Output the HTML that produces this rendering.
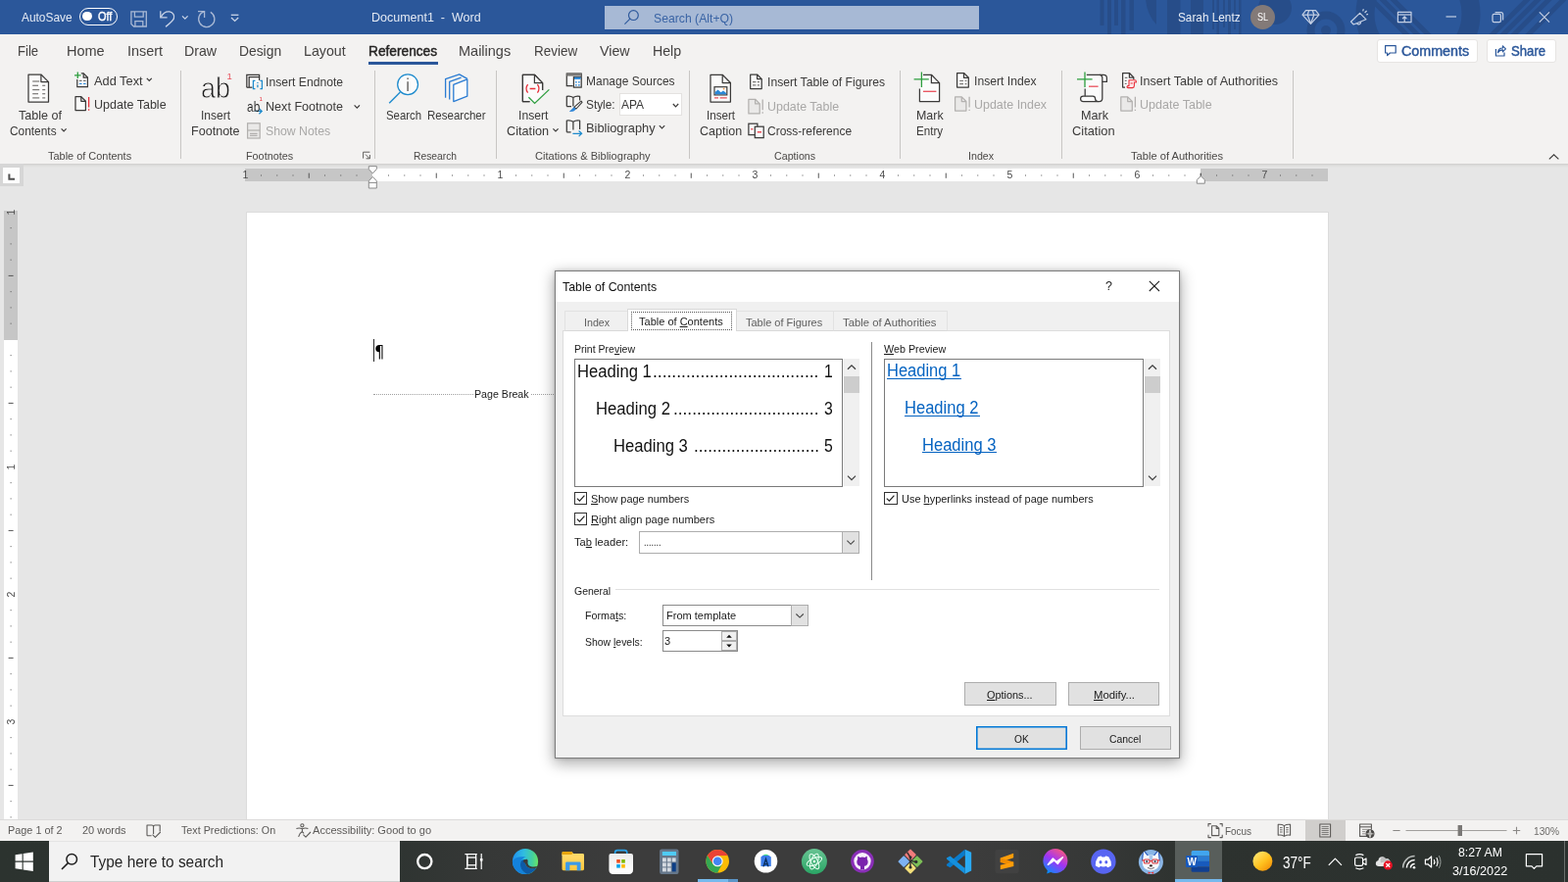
<!DOCTYPE html>
<html lang="en"><head><meta charset="utf-8"><title>Document1 - Word</title>
<style>
html,body{margin:0;padding:0;}
body{width:1600px;height:900px;overflow:hidden;background:#e6e6e6;position:relative;font-family:"Liberation Sans",sans-serif;}
div,span,svg{position:absolute;box-sizing:border-box;}
span{white-space:pre;transform-origin:0 50%;}
svg{overflow:visible;}
u{text-decoration:underline;text-underline-offset:1px;text-decoration-thickness:1px;}
</style></head><body><div id="screen" style="left:0;top:0;width:1600px;height:900px;will-change:transform;">
<div style="left:0px;top:0px;width:1600px;height:35.4px;background:#2b579a;"></div>
<svg style="left:0;top:0;overflow:hidden" width="1600" height="35" viewBox="0 0 1600 35"><g fill="#274d89"><rect x="1122.5" y="0" width="4.0" height="26"/><rect x="1130" y="0" width="4" height="35"/><rect x="1137" y="0" width="4" height="26"/><rect x="1144" y="0" width="4.5" height="35"/><rect x="1152.5" y="0" width="4.5" height="31"/><rect x="1191" y="0" width="13.5" height="35"/><rect x="1215" y="0" width="13" height="35"/><rect x="1237" y="0" width="2" height="30"/><rect x="1241.5" y="0" width="2.5" height="35"/><rect x="1248" y="0" width="2" height="28"/><rect x="1253" y="0" width="3" height="35"/><rect x="1259" y="0" width="2" height="30"/><rect x="1264" y="0" width="2.5" height="35"/><path d="M1169 0 Q1171 16 1180 25 L1180 0 Z"/><circle cx="1301" cy="8" r="17"/></g><g fill="none" stroke="#274d89"><circle cx="1353" cy="31" r="15.5" stroke-width="8"/><circle cx="1447" cy="14" r="54" stroke-width="19"/><path d="M1398 -2 L1440 40 M1409 -2 L1451 40 M1420 -2 L1462 40" stroke-width="5"/><path d="M1521 37 L1560 -2 M1532 37 L1571 -2 M1543 37 L1582 -2 M1558 37 L1597 -2" stroke-width="5"/></g><circle cx="1353" cy="31" r="5" fill="#274d89"/></svg>
<span style="left:21.5px;top:9.6px;font-size:13.5px;line-height:15px;color:#e3e9f3;transform:scaleX(0.8814);">AutoSave</span>
<div style="left:80.5px;top:8px;width:39.5px;height:17.5px;border:1.5px solid #fff;border-radius:9px;"></div>
<div style="left:84.3px;top:11.8px;width:9.5px;height:9.5px;border-radius:5px;background:#fff;"></div>
<span style="left:100.0px;top:10.1px;font-size:12.5px;line-height:14px;color:#fff;transform:scaleX(0.8758);-webkit-text-stroke:0.4px #fff;">Off</span>
<span style="left:378.5px;top:9.6px;font-size:13.5px;line-height:15px;color:#e3e9f3;transform:scaleX(0.9258);">Document1  -  Word</span>
<div style="left:617px;top:6px;width:382px;height:24px;background:#a7b9d5;"></div>
<div style="left:617px;top:30px;width:382px;height:1px;background:#22509a;"></div>
<span style="left:667.0px;top:10.7px;font-size:13.5px;line-height:15px;color:#3a64a5;transform:scaleX(0.9045);">Search (Alt+Q)</span>
<span style="left:1201.5px;top:9.9px;font-size:13.5px;line-height:15px;color:#e8edf5;transform:scaleX(0.8736);">Sarah Lentz</span>
<div style="left:1276px;top:5px;width:25px;height:25px;border-radius:13px;background:#837a78;"></div>
<span style="left:1282.5px;top:11.3px;font-size:11.5px;line-height:12px;color:#fff;transform:scaleX(0.7891);">SL</span>
<svg style="left:0;top:0" width="1600" height="35" viewBox="0 0 1600 35"><g fill="none" stroke="#a9b9d5" stroke-width="1.3" stroke-linejoin="miter"><path d="M133.9 11.8 H149.3 V27 H136.5 L133.9 24.4 Z"/><path d="M137.4 12 V17.1 H146.2 V12"/><path d="M137.9 27 V21.7 H145.8 V27"/><path d="M214.8 12.4 A8.1 8.1 0 1 1 208.4 11.7"/><path d="M202 11.7 H208.6 V18"/></g><g fill="none" stroke="#c9d4e7" stroke-width="1.3"><path d="M163.8 11.2 V17.8 H170.6"/><path d="M164.2 17.4 C166.4 13.4 169.8 11.4 173 11.9 C176.4 12.5 178.4 15.6 177.4 18.8 C176.6 21.4 173.4 23.8 169 27.3"/><path d="M186 16.4 L188.8 19.2 L191.6 16.4"/><path d="M235.8 15.3 H243.4"/><path d="M236 18 L239.6 21.4 L243.2 18"/></g><g fill="none" stroke="#2f5a9d" stroke-width="1.2"><circle cx="646.4" cy="15.6" r="4.9"/><path d="M642.9 19.2 L637.4 24.7"/></g><g fill="none" stroke="#c3cfe4" stroke-width="1.2" stroke-linejoin="round"><path d="M1332.5 10.6 H1342.5 L1346 15.2 L1337.5 24.3 L1329 15.2 Z"/><path d="M1329.2 15.2 H1345.8"/><path d="M1335.6 10.8 L1334.2 15.2 L1337.5 24 L1340.8 15.2 L1339.4 10.8"/><path d="M1387.6 13.4 L1394 19.8 L1381.2 25 L1378.4 22.2 Z"/><path d="M1384.6 23.8 A2.2 2.2 0 0 0 1388.6 22.2"/><path d="M1390.6 11.4 L1391.4 9.2 M1392.6 13 L1394.6 11 M1394.2 15 L1396 14.4"/><rect x="1426.4" y="12.4" width="13.6" height="10.2"/><path d="M1426.4 15 H1440"/><path d="M1433.2 22 V17.2 M1431 19.2 L1433.2 17 L1435.4 19.2"/><path d="M1475.5 17 H1486"/><rect x="1523" y="14.4" width="8.4" height="8.2" rx="1.6"/><path d="M1525.6 12.6 H1531.6 A2 2 0 0 1 1533.6 14.6 V20.4"/><path d="M1570.8 12.4 L1581 22.6 M1581 12.4 L1570.8 22.6"/></g></svg>
<div style="left:0px;top:35px;width:1600px;height:132px;background:#f3f2f1;"></div>
<span style="left:17.5px;top:43.5px;font-size:14.5px;line-height:16px;color:#444241;transform:scaleX(0.9030);">File</span>
<span style="left:68.0px;top:43.5px;font-size:14.5px;line-height:16px;color:#444241;">Home</span>
<span style="left:129.5px;top:43.5px;font-size:14.5px;line-height:16px;color:#444241;transform:scaleX(0.9955);">Insert</span>
<span style="left:188.0px;top:43.5px;font-size:14.5px;line-height:16px;color:#444241;transform:scaleX(0.9782);">Draw</span>
<span style="left:244.0px;top:43.5px;font-size:14.5px;line-height:16px;color:#444241;transform:scaleX(0.9549);">Design</span>
<span style="left:309.5px;top:43.5px;font-size:14.5px;line-height:16px;color:#444241;transform:scaleX(0.9785);">Layout</span>
<span style="left:468.0px;top:43.5px;font-size:14.5px;line-height:16px;color:#444241;">Mailings</span>
<span style="left:544.5px;top:43.5px;font-size:14.5px;line-height:16px;color:#444241;transform:scaleX(0.9276);">Review</span>
<span style="left:612.0px;top:43.5px;font-size:14.5px;line-height:16px;color:#444241;transform:scaleX(0.9818);">View</span>
<span style="left:665.5px;top:43.5px;font-size:14.5px;line-height:16px;color:#444241;transform:scaleX(0.9758);">Help</span>
<span style="left:376.0px;top:43.5px;font-size:14.5px;line-height:16px;color:#252423;transform:scaleX(0.9454);-webkit-text-stroke:0.45px #252423;">References</span>
<div style="left:376px;top:63px;width:71px;height:2.5px;background:#2b579a;"></div>
<div style="left:1405px;top:40px;width:103px;height:24px;background:#fff;border:1px solid #e6e4e2;border-radius:3px;"></div>
<div style="left:1517px;top:40px;width:71px;height:24px;background:#fff;border:1px solid #e6e4e2;border-radius:3px;"></div>
<span style="left:1429.5px;top:43.5px;font-size:14.5px;line-height:16px;color:#2b579a;transform:scaleX(0.9857);-webkit-text-stroke:0.45px #2b579a;">Comments</span>
<span style="left:1542.0px;top:43.5px;font-size:14.5px;line-height:16px;color:#2b579a;transform:scaleX(0.9071);-webkit-text-stroke:0.45px #2b579a;">Share</span>
<svg style="left:0;top:35px" width="1600" height="131" viewBox="0 35 1600 131"><g fill="none" stroke="#2b579a" stroke-width="1.2" stroke-linejoin="round"><path d="M1413.6 46.6 H1424.2 V54 H1418.4 L1415.6 56.6 V54 H1413.6 Z"/><path d="M1526.4 50 V57 H1535 V53.6"/><path d="M1528.4 53.8 C1528.8 50.6 1530.8 49 1533.4 49 V46.8 L1536.4 49.8 L1533.4 52.8 V50.8 C1531.2 50.8 1529.6 51.8 1528.4 53.8 Z"/></g><path d="M1580.8 162.4 L1585.6 157.8 L1590.4 162.4" fill="none" stroke="#3b3a39" stroke-width="1.2"/></svg>
<div style="left:184px;top:72px;width:1px;height:90px;background:#c8c6c4;"></div>
<div style="left:382px;top:72px;width:1px;height:90px;background:#c8c6c4;"></div>
<div style="left:506px;top:72px;width:1px;height:90px;background:#c8c6c4;"></div>
<div style="left:703px;top:72px;width:1px;height:90px;background:#c8c6c4;"></div>
<div style="left:918px;top:72px;width:1px;height:90px;background:#c8c6c4;"></div>
<div style="left:1083px;top:72px;width:1px;height:90px;background:#c8c6c4;"></div>
<div style="left:1319px;top:72px;width:1px;height:90px;background:#c8c6c4;"></div>
<div style="left:0;top:167px;width:1600px;height:3.5px;background:linear-gradient(#cfcecd,#dddddc 45%,#e6e6e6);"></div>
<div style="left:632px;top:94.6px;width:63.8px;height:23.4px;background:#fff;border:1px solid #e4e2e0;"></div>
<svg style="left:0;top:68px" width="1600" height="100" viewBox="0 68 1600 100"><path d="M29 76 H41.9 L49.5 83.6 V104 H29 Z" fill="#fbfbfb" stroke="#3b3a39" stroke-width="1.25" stroke-linejoin="round"/><path d="M41.9 76 V83.6 H49.5" fill="none" stroke="#3b3a39" stroke-width="1.25" stroke-linejoin="round"/><path d="M33.2 83 H40.2" fill="none" stroke="#797775" stroke-width="1.2" /><path d="M33.2 87.3 H39" fill="none" stroke="#797775" stroke-width="1.2" /><path d="M43.2 87.3 H46.2" fill="none" stroke="#797775" stroke-width="1.2" /><path d="M33.2 91.6 H40.2" fill="none" stroke="#797775" stroke-width="1.2" /><path d="M43.2 91.6 H46.2" fill="none" stroke="#797775" stroke-width="1.2" /><path d="M33.2 95.7 H39" fill="none" stroke="#797775" stroke-width="1.2" /><path d="M43.2 95.7 H46.2" fill="none" stroke="#797775" stroke-width="1.2" /><path d="M33.2 99.9 H40.2" fill="none" stroke="#797775" stroke-width="1.2" /><path d="M43.2 99.9 H46.2" fill="none" stroke="#797775" stroke-width="1.2" /><path d="M82.8 74.8 H85.2 L89.4 79 V88.6 H78.8 V81" fill="#fbfbfb" stroke="#3b3a39" stroke-width="1.25"/><path d="M85.2 74.8 V79 H89.4" fill="none" stroke="#3b3a39" stroke-width="1.25" /><path d="M76 76.8 H82.6 M79.3 73.5 V80.1" fill="none" stroke="#2e9e3f" stroke-width="1.3" /><path d="M80.8 82.4 H83.6 M85 82.4 H87.6" fill="none" stroke="#797775" stroke-width="1.2" /><path d="M80.8 85.5 H83.6 M85 85.5 H87.6" fill="none" stroke="#2b88d8" stroke-width="1.2" /><path d="M149.8 79.8 L152.3 82.4 L154.8 79.8" fill="none" stroke="#3b3a39" stroke-width="1.2" /><path d="M77 98.7 H82.80000000000001 L87.4 103.3 V112.6 H77 Z" fill="#fbfbfb" stroke="#3b3a39" stroke-width="1.25" stroke-linejoin="round"/><path d="M82.80000000000001 98.7 V103.3 H87.4" fill="none" stroke="#3b3a39" stroke-width="1.25" stroke-linejoin="round"/><path d="M90.6 99 V109.4 M90.6 111.3 V112.7" fill="none" stroke="#e8303a" stroke-width="1.3" /><path d="M62.6 131.4 L65.1 134 L67.6 131.4" fill="none" stroke="#3b3a39" stroke-width="1.2" /><path d="M251.8 89.2 V76.3 H264.6 V78.4" fill="none" stroke="#3b3a39" stroke-width="1.25" /><path d="M254.2 89.2 V78.7 H264.6 V82" fill="#fbfbfb" stroke="#3b3a39" stroke-width="1.25"/><path d="M251.8 89.2 H257.4" fill="none" stroke="#3b3a39" stroke-width="1.25" /><path d="M260.4 82.3 H258.4 V90.7 H260.4 M265.4 82.3 H267.4 V90.7 H265.4 M262.9 86.4 V89.2 M262.9 83.9 V85" fill="none" stroke="#1e8bcd" stroke-width="1.25" /><path d="M259.8 113.4 H267 M264.4 110.6 L267.2 113.4 L264.4 116.2" fill="none" stroke="#1e8bcd" stroke-width="1.25" /><path d="M361.6 107.4 L364.3 110.2 L367 107.4" fill="none" stroke="#3b3a39" stroke-width="1.2" /><rect x="252.6" y="125.8" width="12.6" height="15.2" fill="#eae9e8" stroke="#b3b1af" stroke-width="1.25"/><path d="M252.6 133 H265.2" fill="none" stroke="#b3b1af" stroke-width="1.25" /><path d="M255 136.4 H262.6 M255 138.4 H262.6" fill="none" stroke="#b3b1af" stroke-width="1.1" /><path d="M370.6 155.2 H377.4 M370.6 155.2 V161.6 M373 157.6 L377.2 161.8 M377.4 158 V161.8 H373.6" fill="none" stroke="#605e5c" stroke-width="1.0" /><circle cx="416.1" cy="86.2" r="10.4" fill="#fbfbfb" stroke="#1e8bcd" stroke-width="1.3"/><path d="M408.4 93.9 L397.2 105.2" fill="none" stroke="#1e8bcd" stroke-width="1.4" /><path d="M416.1 83.3 V93 M416.1 79.4 V81" fill="none" stroke="#605e5c" stroke-width="1.4" /><path d="M454.6 99.8 V80.6 L468.7 75.9 L476.8 80.4" fill="none" stroke="#2b7cd3" stroke-width="1.3" stroke-linejoin="round"/><path d="M458.7 101.6 V83.4 L470.6 79.2" fill="none" stroke="#2b7cd3" stroke-width="1.3" stroke-linejoin="round"/><path d="M462.8 86.4 L476.8 80.8 V98.2 L462.8 103.6 Z" fill="#fbfbfb" stroke="#2b7cd3" stroke-width="1.3" stroke-linejoin="round"/><path d="M540.6 103.6 H533.4 V76.3 H545.4 L553.6 84.6 V92" fill="#fbfbfb" stroke="#3b3a39" stroke-width="1.25" stroke-linejoin="round"/><path d="M540.6 103.6 H533.4 V76.3 H545.4 L553.6 84.6 V96 L546 104 Z" fill="#fbfbfb" stroke="none"/><path d="M540.6 103.6 H533.4 V76.3 H545.4 L553.6 84.6 V92" fill="none" stroke="#3b3a39" stroke-width="1.25" stroke-linejoin="round"/><path d="M545.4 76.3 V84.6 H553.6" fill="none" stroke="#3b3a39" stroke-width="1.25" /><path d="M538.6 86.2 Q535.4 90.4 538.6 94.6 M548.4 86.2 Q551.6 90.4 548.4 94.6 M540.6 90.5 H546.4" fill="none" stroke="#e8303a" stroke-width="1.3" /><path d="M539.4 99.2 L545.6 105.4 L560.4 91.4" fill="none" stroke="#2e9e3f" stroke-width="1.3" /><path d="M564.4 131.4 L567.0 134 L569.6 131.4" fill="none" stroke="#3b3a39" stroke-width="1.2" /><path d="M584.6 87.6 H578.3 V75.1 H593.2 V78" fill="#fbfbfb" stroke="#3b3a39" stroke-width="1.25"/><rect x="578.3" y="74.6" width="14.9" height="3" fill="#797775"/><rect x="585.4" y="78.7" width="7.8" height="10.4" fill="#fbfbfb" stroke="#3b3a39" stroke-width="1.25"/><rect x="586" y="78.7" width="6.6" height="2.2" fill="#2b88d8"/><rect x="587.1" y="83.10000000000001" width="1.5" height="1.5" fill="#2b88d8"/><rect x="590.1" y="83.10000000000001" width="1.5" height="1.5" fill="#2b88d8"/><rect x="587.1" y="86.10000000000001" width="1.5" height="1.5" fill="#2b88d8"/><rect x="590.1" y="86.10000000000001" width="1.5" height="1.5" fill="#2b88d8"/><path d="M578.3 108.6 V98.4 Q582 97.6 584.9 99.6 Q587.8 97.6 591.6 98.4 V102.6 M584.9 99.6 V108.6 M578.3 108.6 H583" fill="none" stroke="#3b3a39" stroke-width="1.25" stroke-linejoin="round"/><path d="M593 103.2 L594 104.4 L588 111 L585.8 109.4 Z" fill="#fbfbfb" stroke="#3b3a39" stroke-width="1.1" stroke-linejoin="round"/><path d="M585.6 109.6 L587.6 111.4 Q585.4 114 581.4 113.6 Q583.6 112 585.6 109.6 Z" fill="#2b88d8" stroke="#2b7cd3" stroke-width="0.6"/><path d="M578.3 134.8 V123 Q582 122.2 584.9 124.2 Q587.8 122.2 591.6 123 V132 M584.9 124.2 V132.4 M578.3 134.8 H582.6" fill="none" stroke="#3b3a39" stroke-width="1.25" stroke-linejoin="round"/><path d="M584.4 136.3 H593.4 M590.6 133.5 L593.6 136.3 L590.6 139.1" fill="none" stroke="#1e8bcd" stroke-width="1.25" /><path d="M672.8 128.2 L675.5 130.9 L678.2 128.2" fill="none" stroke="#3b3a39" stroke-width="1.2" /><path d="M686.8 106 L689.5 108.8 L692.2 106" fill="none" stroke="#3b3a39" stroke-width="1.2" /><path d="M725 76.3 H737.1999999999999 L745.4 84.5 V104 H725 Z" fill="#fbfbfb" stroke="#3b3a39" stroke-width="1.25" stroke-linejoin="round"/><path d="M737.1999999999999 76.3 V84.5 H745.4" fill="none" stroke="#3b3a39" stroke-width="1.25" stroke-linejoin="round"/><rect x="729" y="88.7" width="12.8" height="8.2" fill="#fff" stroke="#3b3a39" stroke-width="1.2"/><path d="M729.6 96.3 V94 L732.6 91.4 L735.6 94.2 L738 92.4 L741.2 95 V96.3 Z" fill="#2b88d8"/><circle cx="738.6" cy="90.6" r="0.9" fill="#f2994a"/><path d="M729 99.9 H733 M734.6 99.9 H741.8" fill="none" stroke="#e8505b" stroke-width="1.2" /><path d="M765.7 76 H772.6 L777.2 80.6 V90.6 H765.7 Z" fill="#fbfbfb" stroke="#3b3a39" stroke-width="1.25" stroke-linejoin="round"/><path d="M772.6 76 V80.6 H777.2" fill="none" stroke="#3b3a39" stroke-width="1.25" stroke-linejoin="round"/><path d="M768 83.7 H771.4 M772.8 83.7 H775 M768 86.9 H771.4 M772.8 86.9 H775" fill="none" stroke="#797775" stroke-width="1.2" /><path d="M763.9 101.3 H770.6 L775.2 105.89999999999999 V115.9 H763.9 Z" fill="#eae9e8" stroke="#b3b1af" stroke-width="1.25" stroke-linejoin="round"/><path d="M770.6 101.3 V105.89999999999999 H775.2" fill="none" stroke="#b3b1af" stroke-width="1.25" stroke-linejoin="round"/><path d="M778.2 101.4 V112.2 M778.2 114.3 V115.7" fill="none" stroke="#b3b1af" stroke-width="1.3" /><rect x="763.9" y="126.2" width="9" height="11.4" fill="#fbfbfb" stroke="#3b3a39" stroke-width="1.25"/><path d="M766.2 131.8 H768.4" fill="none" stroke="#e8303a" stroke-width="1.2" /><rect x="770.3" y="129.2" width="8.9" height="11.4" fill="#fbfbfb" stroke="#3b3a39" stroke-width="1.25"/><path d="M772.8 134.8 H777" fill="none" stroke="#e8303a" stroke-width="1.3" /><path d="M942 76.3 H950.4 L958.6 84.6 V103.6 H938.4 V90.6" fill="#fbfbfb" stroke="#3b3a39" stroke-width="1.25" stroke-linejoin="round"/><path d="M950.4 76.3 V84.6 H958.6" fill="none" stroke="#3b3a39" stroke-width="1.25" /><path d="M932.6 80.8 H947.8 M940.4 73.4 V89" fill="none" stroke="#2e9e3f" stroke-width="1.3" /><path d="M942 93.3 H955.4" fill="none" stroke="#e8505b" stroke-width="1.3" /><path d="M976.6 74.5 H983.5 L988.3 79.3 V89 H976.6 Z" fill="#fbfbfb" stroke="#3b3a39" stroke-width="1.25" stroke-linejoin="round"/><path d="M983.5 74.5 V79.3 H988.3" fill="none" stroke="#3b3a39" stroke-width="1.25" stroke-linejoin="round"/><path d="M979.2 82.5 H983 M984.6 82.5 H986.4 M979.2 85.6 H983 M984.6 85.6 H986.4" fill="none" stroke="#797775" stroke-width="1.2" /><path d="M974.6 98.9 H981.3 L985.9 103.5 V113.1 H974.6 Z" fill="#eae9e8" stroke="#b3b1af" stroke-width="1.25" stroke-linejoin="round"/><path d="M981.3 98.9 V103.5 H985.9" fill="none" stroke="#b3b1af" stroke-width="1.25" stroke-linejoin="round"/><path d="M989.1 98.8 V109.6 M989.1 111.7 V113.10000000000001" fill="none" stroke="#b3b1af" stroke-width="1.3" /><path d="M1108.8 76.3 H1126 Q1129.4 76.3 1129.4 79.8 V83.4 H1124.8 V100.6 Q1124.8 103.6 1121.6 103.6 H1105.4 Q1102.6 103.6 1102.6 100.8 Q1102.6 98 1105.4 98 H1107.2 V90.6" fill="#fbfbfb" stroke="#3b3a39" stroke-width="1.25" stroke-linejoin="round"/><path d="M1124.8 83.4 V79.6 Q1124.8 76.6 1122 76.4" fill="none" stroke="#3b3a39" stroke-width="1.25" /><path d="M1107.2 98 H1115 Q1117.6 98 1117.6 100.8 Q1117.6 103.4 1120.4 103.6" fill="none" stroke="#3b3a39" stroke-width="1.25" /><path d="M1099 80.8 H1114.6 M1107 73.4 V89" fill="none" stroke="#2e9e3f" stroke-width="1.3" /><path d="M1111 88.2 H1120.6" fill="none" stroke="#e8505b" stroke-width="1.3" /><path d="M1148 89 H1145.6 V74.5 H1152.4 L1156.8 79 V81" fill="#fbfbfb" stroke="#3b3a39" stroke-width="1.25" stroke-linejoin="round"/><path d="M1152.4 74.5 V79 H1156.8" fill="none" stroke="#3b3a39" stroke-width="1.25" /><path d="M1147.8 79.4 H1150.4 M1147.8 82.4 H1149.6 M1147.8 85.4 H1149.6" fill="none" stroke="#797775" stroke-width="1.1" /><path d="M1152 81.8 H1158 Q1159.4 81.8 1159.4 83.2 V84 H1157.4 V87.6 Q1157.4 89.6 1155.6 89.6 H1151 Q1150 89.6 1150 88.6 Q1150 87.6 1151 87.6 H1152 Z" fill="#fde7e9" stroke="#e8303a" stroke-width="1.1" stroke-linejoin="round"/><path d="M1153.6 85 H1155.8" fill="none" stroke="#e8303a" stroke-width="1.0" /><path d="M1143.8 98.9 H1150.7 L1155.3 103.5 V113.1 H1143.8 Z" fill="#eae9e8" stroke="#b3b1af" stroke-width="1.25" stroke-linejoin="round"/><path d="M1150.7 98.9 V103.5 H1155.3" fill="none" stroke="#b3b1af" stroke-width="1.25" stroke-linejoin="round"/><path d="M1158.4 98.8 V109.6 M1158.4 111.7 V113.10000000000001" fill="none" stroke="#b3b1af" stroke-width="1.3" /></svg>
<span style="left:205px;top:74.1px;font-size:27px;line-height:30px;color:#1c1c1c;transform:scale(1.0,1.08);transform-origin:0 0;-webkit-text-stroke:0.75px #f3f2f1;">ab</span>
<span style="left:231.5px;top:71.8px;font-size:9.5px;line-height:11px;color:#e8505b;">1</span>
<span style="left:251.5px;top:100.6px;font-size:13px;line-height:15px;color:#1a1a1a;transform:scale(0.92,1.06);transform-origin:0 0;-webkit-text-stroke:0.1px #f3f2f1;">ab</span>
<span style="left:264.5px;top:98.4px;font-size:6px;line-height:6px;color:#e8303a;">1</span>
<span style="left:18.5px;top:109.6px;font-size:13.5px;line-height:15px;color:#3b3a39;transform:scaleX(0.9327);">Table of</span>
<span style="left:10.0px;top:125.6px;font-size:13.5px;line-height:15px;color:#3b3a39;transform:scaleX(0.8809);">Contents</span>
<span style="left:95.5px;top:74.6px;font-size:13.5px;line-height:15px;color:#3b3a39;transform:scaleX(0.9486);">Add Text</span>
<span style="left:95.5px;top:98.6px;font-size:13.5px;line-height:15px;color:#3b3a39;transform:scaleX(0.9280);">Update Table</span>
<span style="left:49.0px;top:152.5px;font-size:11px;line-height:12px;color:#4a4846;transform:scaleX(0.9940);">Table of Contents</span>
<span style="left:205.0px;top:109.6px;font-size:13.5px;line-height:15px;color:#3b3a39;transform:scaleX(0.8915);">Insert</span>
<span style="left:195.0px;top:125.6px;font-size:13.5px;line-height:15px;color:#3b3a39;transform:scaleX(0.9308);">Footnote</span>
<span style="left:270.5px;top:76.1px;font-size:13.5px;line-height:15px;color:#3b3a39;transform:scaleX(0.9008);">Insert Endnote</span>
<span style="left:270.5px;top:100.6px;font-size:13.5px;line-height:15px;color:#3b3a39;transform:scaleX(0.9328);">Next Footnote</span>
<span style="left:270.5px;top:126.1px;font-size:13.5px;line-height:15px;color:#a9a8a7;transform:scaleX(0.9081);">Show Notes</span>
<span style="left:251.0px;top:152.5px;font-size:11px;line-height:12px;color:#4a4846;transform:scaleX(0.9832);">Footnotes</span>
<span style="left:394.0px;top:109.6px;font-size:13.5px;line-height:15px;color:#3b3a39;transform:scaleX(0.8439);">Search</span>
<span style="left:436.0px;top:109.6px;font-size:13.5px;line-height:15px;color:#3b3a39;transform:scaleX(0.8541);">Researcher</span>
<span style="left:421.5px;top:152.5px;font-size:11px;line-height:12px;color:#4a4846;transform:scaleX(0.9367);">Research</span>
<span style="left:528.9px;top:109.6px;font-size:13.5px;line-height:15px;color:#3b3a39;transform:scaleX(0.9004);">Insert</span>
<span style="left:516.5px;top:125.6px;font-size:13.5px;line-height:15px;color:#3b3a39;transform:scaleX(0.9416);">Citation</span>
<span style="left:597.5px;top:74.6px;font-size:13.5px;line-height:15px;color:#3b3a39;transform:scaleX(0.8877);">Manage Sources</span>
<span style="left:597.5px;top:98.6px;font-size:13.5px;line-height:15px;color:#3b3a39;transform:scaleX(0.8767);">Style:</span>
<span style="left:634.0px;top:98.6px;font-size:13.5px;line-height:15px;color:#3b3a39;transform:scaleX(0.8880);">APA</span>
<span style="left:597.5px;top:123.1px;font-size:13.5px;line-height:15px;color:#3b3a39;transform:scaleX(0.9502);">Bibliography</span>
<span style="left:545.5px;top:152.5px;font-size:11px;line-height:12px;color:#4a4846;transform:scaleX(1.0070);">Citations &amp; Bibliography</span>
<span style="left:721.0px;top:109.6px;font-size:13.5px;line-height:15px;color:#3b3a39;transform:scaleX(0.8619);">Insert</span>
<span style="left:714.0px;top:125.6px;font-size:13.5px;line-height:15px;color:#3b3a39;transform:scaleX(0.9262);">Caption</span>
<span style="left:783.0px;top:76.1px;font-size:13.5px;line-height:15px;color:#3b3a39;transform:scaleX(0.9008);">Insert Table of Figures</span>
<span style="left:783.0px;top:100.6px;font-size:13.5px;line-height:15px;color:#a9a8a7;transform:scaleX(0.9216);">Update Table</span>
<span style="left:783.0px;top:126.1px;font-size:13.5px;line-height:15px;color:#3b3a39;transform:scaleX(0.8896);">Cross-reference</span>
<span style="left:790.0px;top:152.5px;font-size:11px;line-height:12px;color:#4a4846;transform:scaleX(0.9697);">Captions</span>
<span style="left:935.0px;top:109.6px;font-size:13.5px;line-height:15px;color:#3b3a39;transform:scaleX(0.9200);">Mark</span>
<span style="left:935.0px;top:125.6px;font-size:13.5px;line-height:15px;color:#3b3a39;transform:scaleX(0.8600);">Entry</span>
<span style="left:994.0px;top:74.6px;font-size:13.5px;line-height:15px;color:#3b3a39;transform:scaleX(0.9016);">Insert Index</span>
<span style="left:994.0px;top:98.6px;font-size:13.5px;line-height:15px;color:#a9a8a7;transform:scaleX(0.9227);">Update Index</span>
<span style="left:988.0px;top:152.5px;font-size:11px;line-height:12px;color:#4a4846;transform:scaleX(0.9699);">Index</span>
<span style="left:1102.5px;top:109.6px;font-size:13.5px;line-height:15px;color:#3b3a39;transform:scaleX(0.9366);">Mark</span>
<span style="left:1094.0px;top:125.6px;font-size:13.5px;line-height:15px;color:#3b3a39;transform:scaleX(0.9525);">Citation</span>
<span style="left:1163.0px;top:74.6px;font-size:13.5px;line-height:15px;color:#3b3a39;transform:scaleX(0.9323);">Insert Table of Authorities</span>
<span style="left:1163.0px;top:98.6px;font-size:13.5px;line-height:15px;color:#a9a8a7;transform:scaleX(0.9280);">Update Table</span>
<span style="left:1154.0px;top:152.5px;font-size:11px;line-height:12px;color:#4a4846;transform:scaleX(1.0124);">Table of Authorities</span>
<div style="left:0px;top:167px;width:24px;height:22.6px;background:#d6d6d6;"></div>
<div style="left:3px;top:171px;width:17.2px;height:15.6px;background:#fdfdfd;"></div>
<svg style="left:0;top:166px" width="30" height="30" viewBox="0 166 30 30"><path d="M9.4 177.6 V182.8 H15" fill="none" stroke="#505050" stroke-width="2"/></svg>
<div style="left:250px;top:172px;width:1105px;height:13px;background:#c6c6c6;"></div>
<div style="left:380px;top:172px;width:845px;height:13px;background:#ffffff;"></div>
<svg style="left:0;top:166px" width="1600" height="30" viewBox="0 166 1600 30"><rect x="266.00" y="178.5" width="1" height="1" fill="#555"/><rect x="282.25" y="178.5" width="1" height="1" fill="#555"/><rect x="298.50" y="178.5" width="1" height="1" fill="#555"/><rect x="314.75" y="176.6" width="1" height="5.2" fill="#555"/><rect x="331.00" y="178.5" width="1" height="1" fill="#555"/><rect x="347.25" y="178.5" width="1" height="1" fill="#555"/><rect x="363.50" y="178.5" width="1" height="1" fill="#555"/><rect x="396.00" y="178.5" width="1" height="1" fill="#555"/><rect x="412.25" y="178.5" width="1" height="1" fill="#555"/><rect x="428.50" y="178.5" width="1" height="1" fill="#555"/><rect x="444.75" y="176.6" width="1" height="5.2" fill="#555"/><rect x="461.00" y="178.5" width="1" height="1" fill="#555"/><rect x="477.25" y="178.5" width="1" height="1" fill="#555"/><rect x="493.50" y="178.5" width="1" height="1" fill="#555"/><rect x="526.00" y="178.5" width="1" height="1" fill="#555"/><rect x="542.25" y="178.5" width="1" height="1" fill="#555"/><rect x="558.50" y="178.5" width="1" height="1" fill="#555"/><rect x="574.75" y="176.6" width="1" height="5.2" fill="#555"/><rect x="591.00" y="178.5" width="1" height="1" fill="#555"/><rect x="607.25" y="178.5" width="1" height="1" fill="#555"/><rect x="623.50" y="178.5" width="1" height="1" fill="#555"/><rect x="656.00" y="178.5" width="1" height="1" fill="#555"/><rect x="672.25" y="178.5" width="1" height="1" fill="#555"/><rect x="688.50" y="178.5" width="1" height="1" fill="#555"/><rect x="704.75" y="176.6" width="1" height="5.2" fill="#555"/><rect x="721.00" y="178.5" width="1" height="1" fill="#555"/><rect x="737.25" y="178.5" width="1" height="1" fill="#555"/><rect x="753.50" y="178.5" width="1" height="1" fill="#555"/><rect x="786.00" y="178.5" width="1" height="1" fill="#555"/><rect x="802.25" y="178.5" width="1" height="1" fill="#555"/><rect x="818.50" y="178.5" width="1" height="1" fill="#555"/><rect x="834.75" y="176.6" width="1" height="5.2" fill="#555"/><rect x="851.00" y="178.5" width="1" height="1" fill="#555"/><rect x="867.25" y="178.5" width="1" height="1" fill="#555"/><rect x="883.50" y="178.5" width="1" height="1" fill="#555"/><rect x="916.00" y="178.5" width="1" height="1" fill="#555"/><rect x="932.25" y="178.5" width="1" height="1" fill="#555"/><rect x="948.50" y="178.5" width="1" height="1" fill="#555"/><rect x="964.75" y="176.6" width="1" height="5.2" fill="#555"/><rect x="981.00" y="178.5" width="1" height="1" fill="#555"/><rect x="997.25" y="178.5" width="1" height="1" fill="#555"/><rect x="1013.50" y="178.5" width="1" height="1" fill="#555"/><rect x="1046.00" y="178.5" width="1" height="1" fill="#555"/><rect x="1062.25" y="178.5" width="1" height="1" fill="#555"/><rect x="1078.50" y="178.5" width="1" height="1" fill="#555"/><rect x="1094.75" y="176.6" width="1" height="5.2" fill="#555"/><rect x="1111.00" y="178.5" width="1" height="1" fill="#555"/><rect x="1127.25" y="178.5" width="1" height="1" fill="#555"/><rect x="1143.50" y="178.5" width="1" height="1" fill="#555"/><rect x="1176.00" y="178.5" width="1" height="1" fill="#555"/><rect x="1192.25" y="178.5" width="1" height="1" fill="#555"/><rect x="1208.50" y="178.5" width="1" height="1" fill="#555"/><rect x="1224.75" y="176.6" width="1" height="5.2" fill="#555"/><rect x="1241.00" y="178.5" width="1" height="1" fill="#555"/><rect x="1257.25" y="178.5" width="1" height="1" fill="#555"/><rect x="1273.50" y="178.5" width="1" height="1" fill="#555"/><rect x="1306.00" y="178.5" width="1" height="1" fill="#555"/><rect x="1322.25" y="178.5" width="1" height="1" fill="#555"/><rect x="1338.50" y="178.5" width="1" height="1" fill="#555"/><path d="M376.3 169.6 H384.3 V172.6 L380.3 177 L376.3 172.6 Z" fill="#fdfdfd" stroke="#8a8a8a" stroke-width="1"/><path d="M376.3 192 V184.6 L380.3 180.4 L384.3 184.6 V192 Z" fill="#fdfdfd" stroke="#8a8a8a" stroke-width="1"/><path d="M376.3 186.4 H384.3" fill="none" stroke="#8a8a8a" stroke-width="1"/><path d="M1221.3 187.2 V183.6 L1225.3 179.6 L1229.3 183.6 V187.2 Z" fill="#fdfdfd" stroke="#8a8a8a" stroke-width="1"/><rect x="1224.8" y="177" width="1" height="2.4" fill="#555"/></svg>
<span style="left:240.3px;top:172px;width:20px;text-align:center;font-size:10.5px;line-height:13px;color:#4a4a4a;">1</span>
<span style="left:500.3px;top:172px;width:20px;text-align:center;font-size:10.5px;line-height:13px;color:#4a4a4a;">1</span>
<span style="left:630.3px;top:172px;width:20px;text-align:center;font-size:10.5px;line-height:13px;color:#4a4a4a;">2</span>
<span style="left:760.3px;top:172px;width:20px;text-align:center;font-size:10.5px;line-height:13px;color:#4a4a4a;">3</span>
<span style="left:890.3px;top:172px;width:20px;text-align:center;font-size:10.5px;line-height:13px;color:#4a4a4a;">4</span>
<span style="left:1020.3px;top:172px;width:20px;text-align:center;font-size:10.5px;line-height:13px;color:#4a4a4a;">5</span>
<span style="left:1150.3px;top:172px;width:20px;text-align:center;font-size:10.5px;line-height:13px;color:#4a4a4a;">6</span>
<span style="left:1280.3px;top:172px;width:20px;text-align:center;font-size:10.5px;line-height:13px;color:#4a4a4a;">7</span>
<div style="left:4px;top:215px;width:14px;height:621px;background:#ffffff;"></div>
<div style="left:4px;top:215px;width:14px;height:132px;background:#c6c6c6;"></div>
<svg style="left:0;top:200px;overflow:hidden" width="30" height="636" viewBox="0 200 30 636"><rect x="10.6" y="232.15" width="1" height="1" fill="#555"/><rect x="10.6" y="248.40" width="1" height="1" fill="#555"/><rect x="10.6" y="264.65" width="1" height="1" fill="#555"/><rect x="8.6" y="280.90" width="5" height="1" fill="#555"/><rect x="10.6" y="297.15" width="1" height="1" fill="#555"/><rect x="10.6" y="313.40" width="1" height="1" fill="#555"/><rect x="10.6" y="329.65" width="1" height="1" fill="#555"/><rect x="10.6" y="362.15" width="1" height="1" fill="#555"/><rect x="10.6" y="378.40" width="1" height="1" fill="#555"/><rect x="10.6" y="394.65" width="1" height="1" fill="#555"/><rect x="8.6" y="410.90" width="5" height="1" fill="#555"/><rect x="10.6" y="427.15" width="1" height="1" fill="#555"/><rect x="10.6" y="443.40" width="1" height="1" fill="#555"/><rect x="10.6" y="459.65" width="1" height="1" fill="#555"/><rect x="10.6" y="492.15" width="1" height="1" fill="#555"/><rect x="10.6" y="508.40" width="1" height="1" fill="#555"/><rect x="10.6" y="524.65" width="1" height="1" fill="#555"/><rect x="8.6" y="540.90" width="5" height="1" fill="#555"/><rect x="10.6" y="557.15" width="1" height="1" fill="#555"/><rect x="10.6" y="573.40" width="1" height="1" fill="#555"/><rect x="10.6" y="589.65" width="1" height="1" fill="#555"/><rect x="10.6" y="622.15" width="1" height="1" fill="#555"/><rect x="10.6" y="638.40" width="1" height="1" fill="#555"/><rect x="10.6" y="654.65" width="1" height="1" fill="#555"/><rect x="8.6" y="670.90" width="5" height="1" fill="#555"/><rect x="10.6" y="687.15" width="1" height="1" fill="#555"/><rect x="10.6" y="703.40" width="1" height="1" fill="#555"/><rect x="10.6" y="719.65" width="1" height="1" fill="#555"/><rect x="10.6" y="752.15" width="1" height="1" fill="#555"/><rect x="10.6" y="768.40" width="1" height="1" fill="#555"/><rect x="10.6" y="784.65" width="1" height="1" fill="#555"/><rect x="8.6" y="800.90" width="5" height="1" fill="#555"/><rect x="10.6" y="817.15" width="1" height="1" fill="#555"/><rect x="10.6" y="833.40" width="1" height="1" fill="#555"/></svg>
<span style="left:1px;top:209.9px;width:20px;height:13px;text-align:center;font-size:10.5px;line-height:13px;color:#4a4a4a;transform:rotate(-90deg);transform-origin:50% 50%;">1</span>
<span style="left:1px;top:469.9px;width:20px;height:13px;text-align:center;font-size:10.5px;line-height:13px;color:#4a4a4a;transform:rotate(-90deg);transform-origin:50% 50%;">1</span>
<span style="left:1px;top:599.9px;width:20px;height:13px;text-align:center;font-size:10.5px;line-height:13px;color:#4a4a4a;transform:rotate(-90deg);transform-origin:50% 50%;">2</span>
<span style="left:1px;top:729.9px;width:20px;height:13px;text-align:center;font-size:10.5px;line-height:13px;color:#4a4a4a;transform:rotate(-90deg);transform-origin:50% 50%;">3</span>
<div style="left:251px;top:216.3px;width:1105px;height:620px;background:#fff;border:1px solid #dcdcdc;border-bottom:none;"></div>
<div style="left:381px;top:402px;width:186px;height:0;border-top:1px dotted #a0a0a0;"></div>
<div style="left:482.5px;top:395px;width:58px;height:14px;background:#fff;"></div>
<span style="left:483.5px;top:395.7px;font-size:10.5px;line-height:12px;color:#1a1a1a;transform:scaleX(1.0133);">Page Break</span>
<div style="left:381px;top:346.4px;width:1px;height:23px;background:#2a2a2a;"></div>
<span style="left:382px;top:347.5px;font-family:'DejaVu Sans',sans-serif;font-size:17.5px;line-height:22px;color:#000;transform:scaleX(0.92);">¶</span>
<div style="left:566px;top:276px;width:638px;height:497.5px;background:#f0f0f0;border:1px solid #7d7d7d;box-shadow:0 4px 14px 1px rgba(0,0,0,.33),0 0 3px rgba(0,0,0,.2);"></div>
<div style="left:567px;top:277px;width:636px;height:30.8px;background:#ffffff;"></div>
<span style="left:574.0px;top:285.1px;font-size:13.5px;line-height:15px;color:#111;transform:scaleX(0.9146);">Table of Contents</span>
<span style="left:1127.9px;top:285.1px;font-size:12.5px;line-height:14px;color:#222;">?</span>
<svg style="left:1172px;top:286px" width="12" height="12" viewBox="0 0 12 12"><path d="M0.8 0.8 L11 11 M11 0.8 L0.8 11" stroke="#222" stroke-width="1.1" fill="none"/></svg>
<div style="left:574.4px;top:336.8px;width:619.3px;height:394.4px;background:#fff;border:1px solid #dddddd;"></div>
<div style="left:576px;top:317.2px;width:64.79999999999995px;height:20.6px;background:#f0f0f0;border:1px solid #e2e2e2;border-bottom:1px solid #d9d9d9;"></div>
<div style="left:751px;top:317.2px;width:99.79999999999995px;height:20.6px;background:#f0f0f0;border:1px solid #e2e2e2;border-bottom:1px solid #d9d9d9;"></div>
<div style="left:849.8px;top:317.2px;width:117.20000000000005px;height:20.6px;background:#f0f0f0;border:1px solid #e2e2e2;border-bottom:1px solid #d9d9d9;"></div>
<div style="left:640.3px;top:315.4px;width:111.6px;height:22.4px;background:#fff;border:1px solid #d9d9d9;border-bottom:none;"></div>
<div style="left:644.3px;top:318.2px;width:103px;height:18.6px;border:1px dotted #555;"></div>
<span style="left:595.6px;top:322.5px;font-size:11.5px;line-height:12px;color:#5e5e5e;transform:scaleX(0.9277);">Index</span>
<span style="left:652.4px;top:321.9px;font-size:11.5px;line-height:12px;color:#1a1a1a;transform:scaleX(0.9575);">Table of <u>C</u>ontents</span>
<span style="left:760.7px;top:322.5px;font-size:11.5px;line-height:12px;color:#5e5e5e;transform:scaleX(0.9557);">Table of Figures</span>
<span style="left:860.2px;top:322.5px;font-size:11.5px;line-height:12px;color:#5e5e5e;transform:scaleX(0.9828);">Table of Authorities</span>
<span style="left:585.5px;top:349.8px;font-size:11.5px;line-height:12px;color:#1a1a1a;transform:scaleX(0.9152);">Print Pre<u>v</u>iew</span>
<div style="left:585.8px;top:366px;width:274.2px;height:130.5px;background:#fff;border:1px solid #7a7a7a;"></div>
<div style="left:861.2px;top:366.4px;width:16px;height:129.8px;background:#f0f0f0;"></div>
<div style="left:861.2px;top:383.8px;width:16px;height:17px;background:#cdcdcd;"></div>
<svg style="left:861.2px;top:366px" width="16" height="130" viewBox="0 0 16 130"><path d="M4 10.8 L8 6.8 L12 10.8 M4 119.6 L8 123.6 L12 119.6" fill="none" stroke="#404040" stroke-width="1.3"/></svg>
<div style="left:902.2px;top:366px;width:265px;height:130.5px;background:#fff;border:1px solid #7a7a7a;"></div>
<div style="left:1168.4px;top:366.4px;width:16px;height:129.8px;background:#f0f0f0;"></div>
<div style="left:1168.4px;top:383.8px;width:16px;height:17px;background:#cdcdcd;"></div>
<svg style="left:1168.4px;top:366px" width="16" height="130" viewBox="0 0 16 130"><path d="M4 10.8 L8 6.8 L12 10.8 M4 119.6 L8 123.6 L12 119.6" fill="none" stroke="#404040" stroke-width="1.3"/></svg>
<span style="left:588.7px;top:369.0px;font-size:17.5px;line-height:20px;color:#111;transform:scaleX(0.9500);">Heading 1</span>
<span style="left:666.3px;top:369.0px;font-size:17.5px;line-height:20px;color:#111;transform:scaleX(0.9955);">...................................</span>
<span style="left:841.1px;top:369.0px;font-size:17.5px;line-height:20px;color:#111;transform:scaleX(0.9000);">1</span>
<span style="left:607.7px;top:407.0px;font-size:17.5px;line-height:20px;color:#111;transform:scaleX(0.9525);">Heading 2</span>
<span style="left:687.3px;top:407.0px;font-size:17.5px;line-height:20px;color:#111;transform:scaleX(0.9847);">...............................</span>
<span style="left:841.1px;top:407.0px;font-size:17.5px;line-height:20px;color:#111;transform:scaleX(0.9000);">3</span>
<span style="left:626.3px;top:445.0px;font-size:17.5px;line-height:20px;color:#111;transform:scaleX(0.9500);">Heading 3</span>
<span style="left:707.7px;top:445.0px;font-size:17.5px;line-height:20px;color:#111;transform:scaleX(0.9751);">...........................</span>
<span style="left:841.1px;top:445.0px;font-size:17.5px;line-height:20px;color:#111;transform:scaleX(0.9000);">5</span>
<span style="left:905.3px;top:368.0px;font-size:17.5px;line-height:20px;color:#0563c1;transform:scaleX(0.9425);">Heading 1</span>
<div style="left:904.8px;top:386.09999999999997px;width:76.60000000000002px;height:1.1px;background:#0563c1;"></div>
<span style="left:923.3px;top:406.0px;font-size:17.5px;line-height:20px;color:#0563c1;transform:scaleX(0.9450);">Heading 2</span>
<div style="left:922.8px;top:423.7px;width:76.80000000000007px;height:1.1px;background:#0563c1;"></div>
<span style="left:941.1px;top:444.0px;font-size:17.5px;line-height:20px;color:#0563c1;transform:scaleX(0.9450);">Heading 3</span>
<div style="left:940.6px;top:461.3px;width:76.79999999999995px;height:1.1px;background:#0563c1;"></div>
<div style="left:585.8px;top:502px;width:13.2px;height:13.2px;background:#fff;border:1px solid #333;"></div>
<svg style="left:585.8px;top:502px" width="13" height="13" viewBox="0 0 13 13"><path d="M2.8 6.6 L5.4 9.2 L10.4 3.6" fill="none" stroke="#222" stroke-width="1.2"/></svg>
<div style="left:585.8px;top:522.6px;width:13.2px;height:13.2px;background:#fff;border:1px solid #333;"></div>
<svg style="left:585.8px;top:522.6px" width="13" height="13" viewBox="0 0 13 13"><path d="M2.8 6.6 L5.4 9.2 L10.4 3.6" fill="none" stroke="#222" stroke-width="1.2"/></svg>
<div style="left:902.4px;top:502px;width:13.2px;height:13.2px;background:#fff;border:1px solid #333;"></div>
<svg style="left:902.4px;top:502px" width="13" height="13" viewBox="0 0 13 13"><path d="M2.8 6.6 L5.4 9.2 L10.4 3.6" fill="none" stroke="#222" stroke-width="1.2"/></svg>
<span style="left:602.9px;top:502.9px;font-size:11.5px;line-height:12px;color:#1a1a1a;transform:scaleX(0.9499);"><u>S</u>how page numbers</span>
<span style="left:602.9px;top:523.9px;font-size:11.5px;line-height:12px;color:#1a1a1a;transform:scaleX(0.9629);"><u>R</u>ight align page numbers</span>
<span style="left:919.9px;top:502.9px;font-size:11.5px;line-height:12px;color:#1a1a1a;transform:scaleX(0.9532);">Use <u>h</u>yperlinks instead of page numbers</span>
<span style="left:901.9px;top:349.8px;font-size:11.5px;line-height:12px;color:#1a1a1a;transform:scaleX(0.9358);"><u>W</u>eb Preview</span>
<span style="left:585.9px;top:546.9px;font-size:11.5px;line-height:12px;color:#1a1a1a;transform:scaleX(0.9701);">Ta<u>b</u> leader:</span>
<div style="left:652.4px;top:542px;width:225px;height:22.6px;background:#fff;border:1px solid #adadad;"></div>
<div style="left:859.4px;top:542px;width:18px;height:22.6px;background:#e1e1e1;border:1px solid #adadad;"></div>
<svg style="left:859.4px;top:542px" width="18" height="22.6" viewBox="0 0 18 22.6"><path d="M5.4 9.700000000000001 L9.1 13.3 L12.8 9.700000000000001" fill="none" stroke="#444" stroke-width="1.1"/></svg>
<span style="left:656.5px;top:546.7px;font-size:11px;line-height:12px;color:#222;transform:scaleX(0.8228);">.......</span>
<div style="left:889px;top:348.6px;width:1px;height:243.4px;background:#8a8a8a;"></div>
<span style="left:586.1px;top:596.5px;font-size:11.5px;line-height:12px;color:#1a1a1a;transform:scaleX(0.9092);">General</span>
<div style="left:628.4px;top:601.4px;width:555px;height:1px;background:#e0e0e0;"></div>
<span style="left:597.2px;top:622.1px;font-size:11.5px;line-height:12px;color:#1a1a1a;transform:scaleX(0.9324);">Forma<u>t</u>s:</span>
<div style="left:676px;top:617.1px;width:148.6px;height:22.2px;background:#fff;border:1px solid #8a8a8a;"></div>
<div style="left:806.6px;top:617.1px;width:18px;height:22.2px;background:#e1e1e1;border:1px solid #adadad;"></div>
<svg style="left:806.6px;top:617.1px" width="18" height="22.2" viewBox="0 0 18 22.2"><path d="M5.4 9.5 L9.1 13.1 L12.8 9.5" fill="none" stroke="#444" stroke-width="1.1"/></svg>
<span style="left:679.6px;top:622.1px;font-size:11.5px;line-height:12px;color:#1a1a1a;transform:scaleX(0.9591);">From template</span>
<span style="left:597.2px;top:648.7px;font-size:11.5px;line-height:12px;color:#1a1a1a;transform:scaleX(0.9077);">Show <u>l</u>evels:</span>
<div style="left:676px;top:643.3px;width:76.8px;height:21.6px;background:#fff;border:1px solid #8a8a8a;"></div>
<span style="left:678.1px;top:647.5px;font-size:11px;line-height:12px;color:#222;">3</span>
<div style="left:736px;top:644.4px;width:16px;height:9.6px;background:#f0f0f0;border:1px solid #adadad;"></div>
<div style="left:736px;top:654px;width:16px;height:9.8px;background:#f0f0f0;border:1px solid #adadad;"></div>
<svg style="left:736px;top:644px" width="16" height="20" viewBox="0 0 16 20"><path d="M5.2 6.8 L8 3.8 L10.8 6.8 Z M5.2 13.4 L8 16.4 L10.8 13.4 Z" fill="#111"/></svg>
<div style="left:984px;top:696px;width:93.5px;height:24px;background:#e1e1e1;border:1px solid #adadad;"></div>
<div style="left:1090px;top:696px;width:93.2px;height:24px;background:#e1e1e1;border:1px solid #adadad;"></div>
<div style="left:996px;top:741px;width:93.2px;height:24px;background:#e1e1e1;border:1px solid #0078d7;box-shadow:inset 0 0 0 0.6px #0078d7;"></div>
<div style="left:1101.8px;top:741px;width:93px;height:24px;background:#e1e1e1;border:1px solid #adadad;"></div>
<span style="left:1006.9px;top:702.5px;font-size:11.5px;line-height:12px;color:#1a1a1a;transform:scaleX(0.9468);"><u>O</u>ptions...</span>
<span style="left:1115.5px;top:702.5px;font-size:11.5px;line-height:12px;color:#1a1a1a;transform:scaleX(0.9858);"><u>M</u>odify...</span>
<span style="left:1034.7px;top:748.1px;font-size:11.5px;line-height:12px;color:#1a1a1a;transform:scaleX(0.8907);">OK</span>
<span style="left:1132.1px;top:748.1px;font-size:11.5px;line-height:12px;color:#1a1a1a;transform:scaleX(0.9023);">Cancel</span>
<div style="left:0px;top:836px;width:1600px;height:22px;background:#f3f2f1;"></div>
<div style="left:0px;top:836px;width:1600px;height:1px;background:#dcdbda;"></div>
<span style="left:8.0px;top:841.3px;font-size:10.5px;line-height:12px;color:#5c5a58;transform:scaleX(1.0352);">Page 1 of 2</span>
<span style="left:84.0px;top:841.3px;font-size:10.5px;line-height:12px;color:#5c5a58;transform:scaleX(1.0468);">20 words</span>
<span style="left:184.5px;top:841.3px;font-size:10.5px;line-height:12px;color:#5c5a58;transform:scaleX(1.0228);">Text Predictions: On</span>
<span style="left:319.0px;top:841.3px;font-size:10.5px;line-height:12px;color:#5c5a58;transform:scaleX(1.0533);">Accessibility: Good to go</span>
<div style="left:1332px;top:837px;width:41px;height:21px;background:#d0cecc;"></div>
<span style="left:1250.0px;top:841.6px;font-size:10.5px;line-height:12px;color:#5c5a58;transform:scaleX(0.9478);">Focus</span>
<span style="left:1565.0px;top:841.6px;font-size:10.5px;line-height:12px;color:#6e6c6a;transform:scaleX(0.9719);">130%</span>
<svg style="left:0;top:836px" width="1600" height="22" viewBox="0 836 1600 22"><g fill="none" stroke="#5c5a58" stroke-width="1.1" stroke-linejoin="round"><path d="M150 852.8 V842 H155 Q156.4 842 156.6 843.4 Q156.8 842 158.2 842 H163.2 V848.4 M156.6 843.4 V851 M150 852.8 H154.6"/><path d="M155.6 851.6 L158.4 854.4 L163.8 849"/><circle cx="308.4" cy="842.3" r="1.6"/><path d="M302.4 845.6 Q305.2 844.2 308.4 845.8 Q311.6 844.2 314.4 845.6 M308.4 845.8 V848.6 Q305.6 850.2 304.6 853.8 M308.4 848.6 Q309.6 849.6 310 850.4"/><path d="M309.4 851.6 L312 854.2 L317 849"/><path d="M1233 843.4 V840.6 H1235.8 M1244.6 840.6 H1247.2 V843.4 M1247.2 851.8 V854.6 H1244.6 M1235.8 854.6 H1233 V851.8"/><path d="M1236.6 842.8 H1241.4 L1243.8 845.2 V852.6 H1236.6 Z M1241.2 843 V845.4 H1243.6"/><path d="M1304.2 852.2 V841.4 Q1307.6 840.8 1310.4 842.6 Q1313.2 840.8 1316.6 841.4 V852.2 Q1313.2 851.6 1310.4 853.4 Q1307.6 851.6 1304.2 852.2 Z M1310.4 842.6 V853.2"/><path d="M1306 844.6 H1308.6 M1306 846.8 H1308.6 M1306 849 H1308.6 M1312.2 844.6 H1314.8 M1312.2 846.8 H1314.8 M1312.2 849 H1314.8" stroke-width="0.9"/><rect x="1346.8" y="841" width="10.8" height="13" fill="#dddbd9"/><path d="M1348.6 843.6 H1355.8 M1348.6 845.6 H1355.8 M1348.6 847.6 H1355.8 M1348.6 849.6 H1355.8 M1348.6 851.6 H1355.8" stroke="#777573" stroke-width="1"/><path d="M1396 853.4 H1387.6 V841 H1399.4 V846.4"/><path d="M1387.6 843.8 H1399.4" /><path d="M1390 846.4 H1397 M1390 848.6 H1393.4 M1390 850.8 H1393" stroke="#8a8886" stroke-width="0.9"/><circle cx="1398" cy="850.8" r="4" fill="#4a4846" stroke="#4a4846"/><path d="M1394.4 850.8 H1401.6 M1398 847 V854.6 M1398 847.2 Q1395.4 850.8 1398 854.4 M1398 847.2 Q1400.6 850.8 1398 854.4" stroke="#e8e6e4" stroke-width="0.7"/></g><path d="M1421.4 847.5 H1428.6 M1543.8 847.5 H1551.2 M1547.5 843.8 V851.2" stroke="#8a8886" stroke-width="1.1" fill="none"/><rect x="1434.5" y="847" width="103" height="1" fill="#a19f9d"/><rect x="1487.6" y="842" width="4.4" height="11" fill="#7a7876"/></svg>
<div style="left:0;top:858px;width:1600px;height:42px;background:linear-gradient(90deg,#2c332f 0,#2e3431 25%,#363837 31%,#3c3c3c 40%,#3c3c3c 62%,#363837 70%,#2d322f 76%,#2b312e 100%);"></div>
<div style="left:50px;top:858px;width:358px;height:42px;background:#f2f2f2;"></div>
<div style="left:50px;top:858px;width:358px;height:1px;background:#e4e4e4;"></div>
<div style="left:50px;top:898.6px;width:358px;height:1.4px;background:#cfcfcf;"></div>
<div style="left:1199px;top:858px;width:48px;height:42px;background:#585e5b;"></div>
<div style="left:1199px;top:897px;width:48px;height:3px;background:#76b9ed;"></div>
<div style="left:712.4px;top:897px;width:31px;height:3px;background:#76b9ed;"></div>
<div style="left:743.4px;top:897px;width:9.2px;height:3px;background:#5b95c7;"></div>
<div style="left:1596px;top:858px;width:1px;height:42px;background:#6a6f6c;"></div>
<span style="left:92.0px;top:869.6px;font-size:16.5px;line-height:18px;color:#262626;transform:scaleX(0.9332);">Type here to search</span>
<span style="left:1309.3px;top:871.5px;font-size:16px;line-height:17px;color:#ffffff;transform:scaleX(0.8478);">37°F</span>
<span style="left:1487.5px;top:862.0px;font-size:13px;line-height:15px;color:#ffffff;transform:scaleX(0.9434);">8:27 AM</span>
<span style="left:1481.7px;top:881.0px;font-size:13px;line-height:15px;color:#ffffff;transform:scaleX(0.9717);">3/16/2022</span>
<svg style="left:0;top:858px" width="1600" height="42" viewBox="0 858 1600 42"><defs>
<linearGradient id="gEdge" x1="0.05" y1="0.45" x2="1" y2="0.5"><stop offset="0" stop-color="#2196ee"/><stop offset="0.4" stop-color="#30bde0"/><stop offset="0.75" stop-color="#43cfa0"/><stop offset="1" stop-color="#68e465"/></linearGradient>
<linearGradient id="gFold" x1="0" y1="0" x2="0" y2="1"><stop offset="0" stop-color="#ffdc6e"/><stop offset="1" stop-color="#ffc63a"/></linearGradient>
<linearGradient id="gAtom" x1="0" y1="0" x2="0" y2="1"><stop offset="0" stop-color="#68c493"/><stop offset="1" stop-color="#2aa565"/></linearGradient>
<linearGradient id="gMsg" x1="0.2" y1="1" x2="0.8" y2="0"><stop offset="0" stop-color="#0a8cff"/><stop offset="0.5" stop-color="#a033f5"/><stop offset="1" stop-color="#ff5c78"/></linearGradient>
<linearGradient id="gSun" x1="0.15" y1="0.1" x2="0.85" y2="0.9"><stop offset="0" stop-color="#ffe36a"/><stop offset="0.55" stop-color="#ffc21f"/><stop offset="1" stop-color="#f5930a"/></linearGradient>
<linearGradient id="gStore" x1="0" y1="0" x2="0" y2="1"><stop offset="0" stop-color="#ececec"/><stop offset="1" stop-color="#ffffff"/></linearGradient>
<clipPath id="cDog"><circle cx="1174.4" cy="879.6" r="12.5"/></clipPath>
<clipPath id="cChrome"><circle cx="732.2" cy="878.8" r="11.8"/></clipPath>
</defs><path d="M15.6 872.2 L22.6 871.2 V878.6 H15.6 Z M23.7 871 L33.8 869.6 V878.6 H23.7 Z M15.6 879.7 H22.6 V887.2 L15.6 886.2 Z M23.7 879.7 H33.8 V888.9 L23.7 887.4 Z" fill="#ffffff"/><circle cx="73.2" cy="876.7" r="5.3" fill="none" stroke="#1f1f1f" stroke-width="1.5"/><path d="M69.4 880.6 L63 887" stroke="#1f1f1f" stroke-width="1.6" fill="none"/><circle cx="433.3" cy="879.1" r="7.1" fill="none" stroke="#ffffff" stroke-width="2.3"/><g fill="none" stroke="#ffffff" stroke-width="1.2"><path d="M474.4 871.6 H486.8 M474.4 886.4 H486.8 M476.8 871 V887 M485.6 871 V887 M491.2 871 V887"/><rect x="476.8" y="875" width="8.8" height="7.8" stroke-width="1.3"/></g><rect x="489.9" y="876" width="2.6" height="2.6" fill="#ffffff"/><circle cx="536" cy="879" r="13.1" fill="url(#gEdge)"/><path d="M522.9 878.4 A13.1 13.1 0 0 0 538 891.9 C532 889.6 529.8 884.2 531.6 878.8 C532.6 876.4 534.6 875 536.6 874.8 C531.4 873.4 525.4 875 522.9 878.4 Z" fill="#1482dc"/><path d="M531.6 878.8 C529.8 884.2 532 889.6 538 891.9 A13.1 13.1 0 0 0 547.4 885.5 C543.4 887.2 539 886 537 883.4 C535.6 881.4 535.4 879.4 535.8 877.6 C534 876.8 532.4 877.4 531.6 878.8 Z" fill="#0d5aa7"/><path d="M535.8 877.8 C535.4 879.4 535.6 881.4 537 883.4 C539 886 543.4 887.2 547.4 885.5 L548.2 884 C544.4 885 540.6 884.4 539.2 882.4 C538 880.8 538.8 879.4 538.6 878 C538.2 876.4 536.4 876.2 535.8 877.8 Z" fill="#3a3a3a"/><circle cx="535.7" cy="878.8" r="1.7" fill="#3a3a3a"/><path d="M573.5 872 H596 V886.8 Q596 888.2 594.6 888.2 H574.9 Q573.5 888.2 573.5 886.8 Z" fill="url(#gFold)"/><path d="M573.5 870.4 Q573.5 869 574.9 869 H582.6 Q583.4 869 583.9 869.6 L585 871 H594.6 Q596 871 596 872.4 V873 H573.5 Z" fill="#ffd766"/><path d="M573.5 870.4 Q573.5 869 574.9 869 H582.6 Q583.4 869 583.9 869.6 L584.6 870.6 L583.2 872.1 H573.5 Z" fill="#e8a50e"/><path d="M577.1 888.2 V880.6 Q577.1 879.4 578.3 879.4 H591.4 Q592.6 879.4 592.6 880.6 V888.2 H588.7 V882.8 H581.4 V888.2 Z" fill="#3b9ae8"/><path d="M627.6 872.4 V870 Q627.6 867.6 630 867.6 H637.4 Q639.8 867.6 639.8 870 V872.4" fill="none" stroke="#2aa3ea" stroke-width="1.6"/><path d="M621.4 873 Q621.4 871 623.4 871 H644 Q646 871 646 873 V887.6 Q646 892 641.6 892 H625.8 Q621.4 892 621.4 887.6 Z" fill="url(#gStore)"/><rect x="629.2" y="877" width="3.6" height="3.6" fill="#f25022"/><rect x="634.2" y="877" width="3.6" height="3.6" fill="#7fba00"/><rect x="629.2" y="882" width="3.6" height="3.6" fill="#00a4ef"/><rect x="634.2" y="882" width="3.6" height="3.6" fill="#ffb900"/><rect x="673.1" y="866.6" width="19.4" height="25.4" rx="2" fill="#66788c"/><rect x="675.8" y="869" width="14.2" height="4" fill="#4fcbf5"/><rect x="676.0" y="875.4" width="3.8" height="4" fill="#d4dae1"/><rect x="680.9" y="875.4" width="3.8" height="4" fill="#d4dae1"/><rect x="685.8" y="875.4" width="3.8" height="4" fill="#d4dae1"/><rect x="676.0" y="880.4" width="3.8" height="4" fill="#d4dae1"/><rect x="680.9" y="880.4" width="3.8" height="4" fill="#d4dae1"/><rect x="676.0" y="885.4" width="3.8" height="4" fill="#d4dae1"/><rect x="680.9" y="885.4" width="3.8" height="4" fill="#d4dae1"/><rect x="685.8" y="880.4" width="3.9" height="9" fill="#0d3f86"/><g clip-path="url(#cChrome)"><rect x="718" y="864" width="30" height="30" fill="#fbbc05"/><path d="M722 872.9 L727.4 881.5 L737 881.5 L732.2 890.6 L732 896 H716 V872.9 Z" fill="#34a853"/><path d="M722 872.9 L716 866 V860 H748 V872.9 H742.4 L732.2 873.3 L727.4 881.5 Z" fill="#ea4335"/></g><circle cx="732.2" cy="878.8" r="5.5" fill="#f4f6fb"/><circle cx="732.2" cy="878.8" r="4.3" fill="#4285f4"/><circle cx="781.5" cy="878.8" r="11.8" fill="#ffffff"/><path d="M776.4 874.6 L778.6 872.8 H784.4 L786.8 874.6 V884 H776.4 Z" fill="#3b7de9"/><path d="M778.6 873 Q781.5 870.4 784.4 873 Z" fill="#3ddc84"/><path d="M779 884.4 L781.5 876.6 L784 884.4 M780 881.8 H783" fill="none" stroke="#0b2f5b" stroke-width="1.4"/><circle cx="830.9" cy="879.1" r="13" fill="url(#gAtom)"/><g fill="none" stroke="#e8fff2" stroke-width="1"><ellipse cx="830.9" cy="879.1" rx="8.4" ry="3.4" transform="rotate(-25 830.9 879.1)"/><ellipse cx="830.9" cy="879.1" rx="8.4" ry="3.4" transform="rotate(62 830.9 879.1)"/><ellipse cx="830.9" cy="879.1" rx="8.4" ry="3.4" transform="rotate(112 830.9 879.1)"/></g><circle cx="830.9" cy="879.1" r="1.3" fill="#eefff6"/><circle cx="880" cy="878.8" r="11.8" fill="#8a2fb8"/><circle cx="880" cy="878.8" r="8.7" fill="#f7f1fb"/><path d="M875.6 873.4 L877.4 875 Q880 874.2 882.6 875 L884.4 873.4 Q885.2 875.4 884.8 876.8 Q886 878.4 885.6 880.4 Q885 883.4 882 883.8 V887.2 H878 V883.8 Q875 883.4 874.4 880.4 Q874 878.4 875.2 876.8 Q874.8 875.4 875.6 873.4 Z" fill="#7a23ad"/><g transform="rotate(45 929 879.1)"><rect x="919.9" y="870" width="8.6" height="8.6" rx="1" fill="#f27c7c"/><rect x="929.5" y="870" width="8.6" height="8.6" rx="1" fill="#7cbf57"/><rect x="919.9" y="879.6" width="8.6" height="8.6" rx="1" fill="#7db2f3"/><rect x="929.5" y="879.6" width="8.6" height="8.6" rx="1" fill="#f3df7a"/></g><path d="M925.6 869.6 L929 875 V884.6 M929 878.4 L934.4 879.4" fill="none" stroke="#2e2e2e" stroke-width="1.4"/><circle cx="929" cy="874.8" r="1.5" fill="#2e2e2e"/><circle cx="929" cy="885" r="1.6" fill="#2e2e2e"/><circle cx="934.8" cy="879.4" r="1.6" fill="#2e2e2e"/><path d="M984.6 866.8 L991.2 869.8 V888.6 L984.6 891.8 Z" fill="#2aaaf3"/><path d="M984.6 866.8 L984.6 872.6 L969.6 885.2 L966.2 883.4 Q965.4 882.6 966.2 881.8 Z" fill="#0a7bcb"/><path d="M984.6 891.8 L984.6 886 L969.6 873.4 L966.2 875.2 Q965.4 876 966.2 876.8 Z" fill="#1490de"/><path d="M984.6 873.6 V885 L977.6 879.3 Z" fill="#383838"/><rect x="1015.3" y="867" width="24.4" height="24.2" rx="2.4" fill="#414141"/><path d="M1034.2 870.8 L1020.8 875.6 V880 L1034.2 875.2 Z" fill="#ff9d0a"/><path d="M1020.8 875.6 L1034.2 879.4 V884 L1020.8 880 Z" fill="#f08c00"/><path d="M1034.2 879.6 V884 L1020.8 887.2 V882.8 Z" fill="#ff9d0a"/><path d="M1068.2 891.6 L1069.2 886.4 L1073.4 889.6 Z" fill="#0a8cff"/><circle cx="1076.9" cy="878.5" r="12.5" fill="url(#gMsg)"/><path d="M1069.4 882.3 L1074.4 876 L1078 879.4 L1084.4 874.8 L1079.4 881.4 L1075.8 877.9 Z" fill="#fff" stroke="#fff" stroke-width="1.5" stroke-linejoin="round"/><circle cx="1125.9" cy="879.1" r="12.7" fill="#5865f2"/><path d="M1120.4 874.4 Q1122.2 873.6 1123.8 873.4 L1124.4 874.6 Q1125.9 874.4 1127.4 874.6 L1128 873.4 Q1129.6 873.6 1131.4 874.4 Q1134.4 878.8 1134 883.2 Q1132 884.8 1130 885.2 L1129 883.8 Q1127.4 884.4 1125.9 884.4 Q1124.4 884.4 1122.8 883.8 L1121.8 885.2 Q1119.8 884.8 1117.8 883.2 Q1117.4 878.8 1120.4 874.4 Z" fill="#fff"/><ellipse cx="1123" cy="879.8" rx="1.5" ry="1.7" fill="#5865f2"/><ellipse cx="1128.8" cy="879.8" rx="1.5" ry="1.7" fill="#5865f2"/><circle cx="1174.4" cy="879.6" r="12.5" fill="#8ab6e6"/><g clip-path="url(#cDog)"><path d="M1165.6 878 L1166.6 867.4 L1171.6 873.4 Z M1183.2 878 L1182.2 867.4 L1177.2 873.4 Z" fill="#fdfdfd" stroke="#2f5fc0" stroke-width="1.2" stroke-linejoin="round"/><path d="M1165.8 879 Q1166 872.6 1174.4 872.6 Q1182.8 872.6 1183 879 Q1183.6 887.6 1174.4 888.6 Q1165.2 887.6 1165.8 879 Z" fill="#f6f8fc"/><path d="M1172.6 873 H1176.2 V879 H1172.6 Z" fill="#a9c6ec"/><g fill="#cfe0f6" stroke="#e43b3b" stroke-width="1.1"><rect x="1167.4" y="877" width="5.6" height="4" rx="1"/><rect x="1175.8" y="877" width="5.6" height="4" rx="1"/><path d="M1173 878.6 H1175.8 M1167.4 878.2 L1165.4 877.6 M1181.4 878.2 L1183.4 877.6" fill="none"/></g><circle cx="1170.2" cy="879" r="0.9" fill="#333"/><circle cx="1178.6" cy="879" r="0.9" fill="#333"/><ellipse cx="1174.4" cy="883.4" rx="1.6" ry="1.1" fill="#3a2a2a"/><path d="M1171 885.4 Q1174.4 887.8 1177.8 885.4" fill="none" stroke="#5a4a4a" stroke-width="0.8"/><path d="M1171.6 889.4 L1174.4 890.6 L1177.2 889.4 V892 L1174.4 890.8 L1171.6 892 Z" fill="#e43b3b"/></g><path d="M1215.6 869.4 Q1215.6 867.9 1217.1 867.9 H1232.5 Q1234 867.9 1234 869.4 V873.4 H1215.6 Z" fill="#41a5ee"/><rect x="1215.6" y="873.4" width="18.4" height="5.5" fill="#2b7cd3"/><rect x="1215.6" y="878.9" width="18.4" height="5.5" fill="#185abd"/><path d="M1215.6 884.4 H1234 V888.3 Q1234 889.8 1232.5 889.8 H1217.1 Q1215.6 889.8 1215.6 888.3 Z" fill="#103f91"/><rect x="1210" y="872.9" width="12" height="12.1" rx="1.2" fill="#185abd"/><circle cx="1288.4" cy="878.8" r="10" fill="url(#gSun)"/><g fill="none" stroke="#ffffff" stroke-width="1.2" stroke-linejoin="round"><path d="M1355.8 882.8 L1362.4 876.2 L1369 882.8"/><rect x="1382.6" y="875" width="8" height="8.4" rx="1.6"/><path d="M1390.6 878 L1394 876 V882.4 L1390.6 880.4"/><path d="M1383.4 872.6 Q1387.4 870.6 1391.4 872.6 M1383.4 885.8 Q1387.4 887.8 1391.4 885.8"/><path d="M1454.4 877.2 H1457 L1460.6 874 V885 L1457 881.8 H1454.4 Z"/><path d="M1463.2 877 Q1464.8 879.5 1463.2 882 M1465.8 875 Q1468.4 879.5 1465.8 884" stroke-width="1.1"/><path d="M1468.4 873.2 Q1471.6 879.5 1468.4 885.8" stroke="#9aa09d" stroke-width="1"/><path d="M1557.4 871.7 H1573.6 V883.8 H1567.8 L1565.4 886.4 L1563 883.8 H1557.4 Z"/></g><g fill="none" stroke="#ffffff" stroke-width="1.5"><path d="M1439.4 885.6 A4.2 4.2 0 0 1 1443.6 881.4"/><path d="M1435.4 885.6 A8.2 8.2 0 0 1 1443.6 877.4"/><path d="M1431.6 885.6 A12 12 0 0 1 1443.6 873.6" stroke="#b9bdbb"/></g><circle cx="1443" cy="885.2" r="1.3" fill="#ffffff"/><path d="M1407 884 Q1403.8 884 1403.8 881 Q1403.8 878.4 1406.4 878 Q1406.8 874.4 1410.4 874.2 Q1412.6 874.2 1413.8 876 Q1416.8 875.4 1418 878 Q1419.4 879 1418.8 881.4 Q1418 884 1415.6 884 Z" fill="#e6e6e6"/><path d="M1410.4 874.2 Q1412.6 874.2 1413.8 876 Q1416.8 875.4 1418 878 L1409 880.6 Q1407.6 877 1410.4 874.2 Z" fill="#bdbdbd"/><circle cx="1416.3" cy="882.9" r="4.6" fill="#e81123"/><path d="M1414.4 881 L1418.2 884.8 M1418.2 881 L1414.4 884.8" stroke="#fff" stroke-width="1.3" fill="none"/></svg>
<span style="left:1211.5px;top:873.7px;font-size:10px;line-height:11px;color:#ffffff;font-weight:700;">W</span>
</div></body></html>
